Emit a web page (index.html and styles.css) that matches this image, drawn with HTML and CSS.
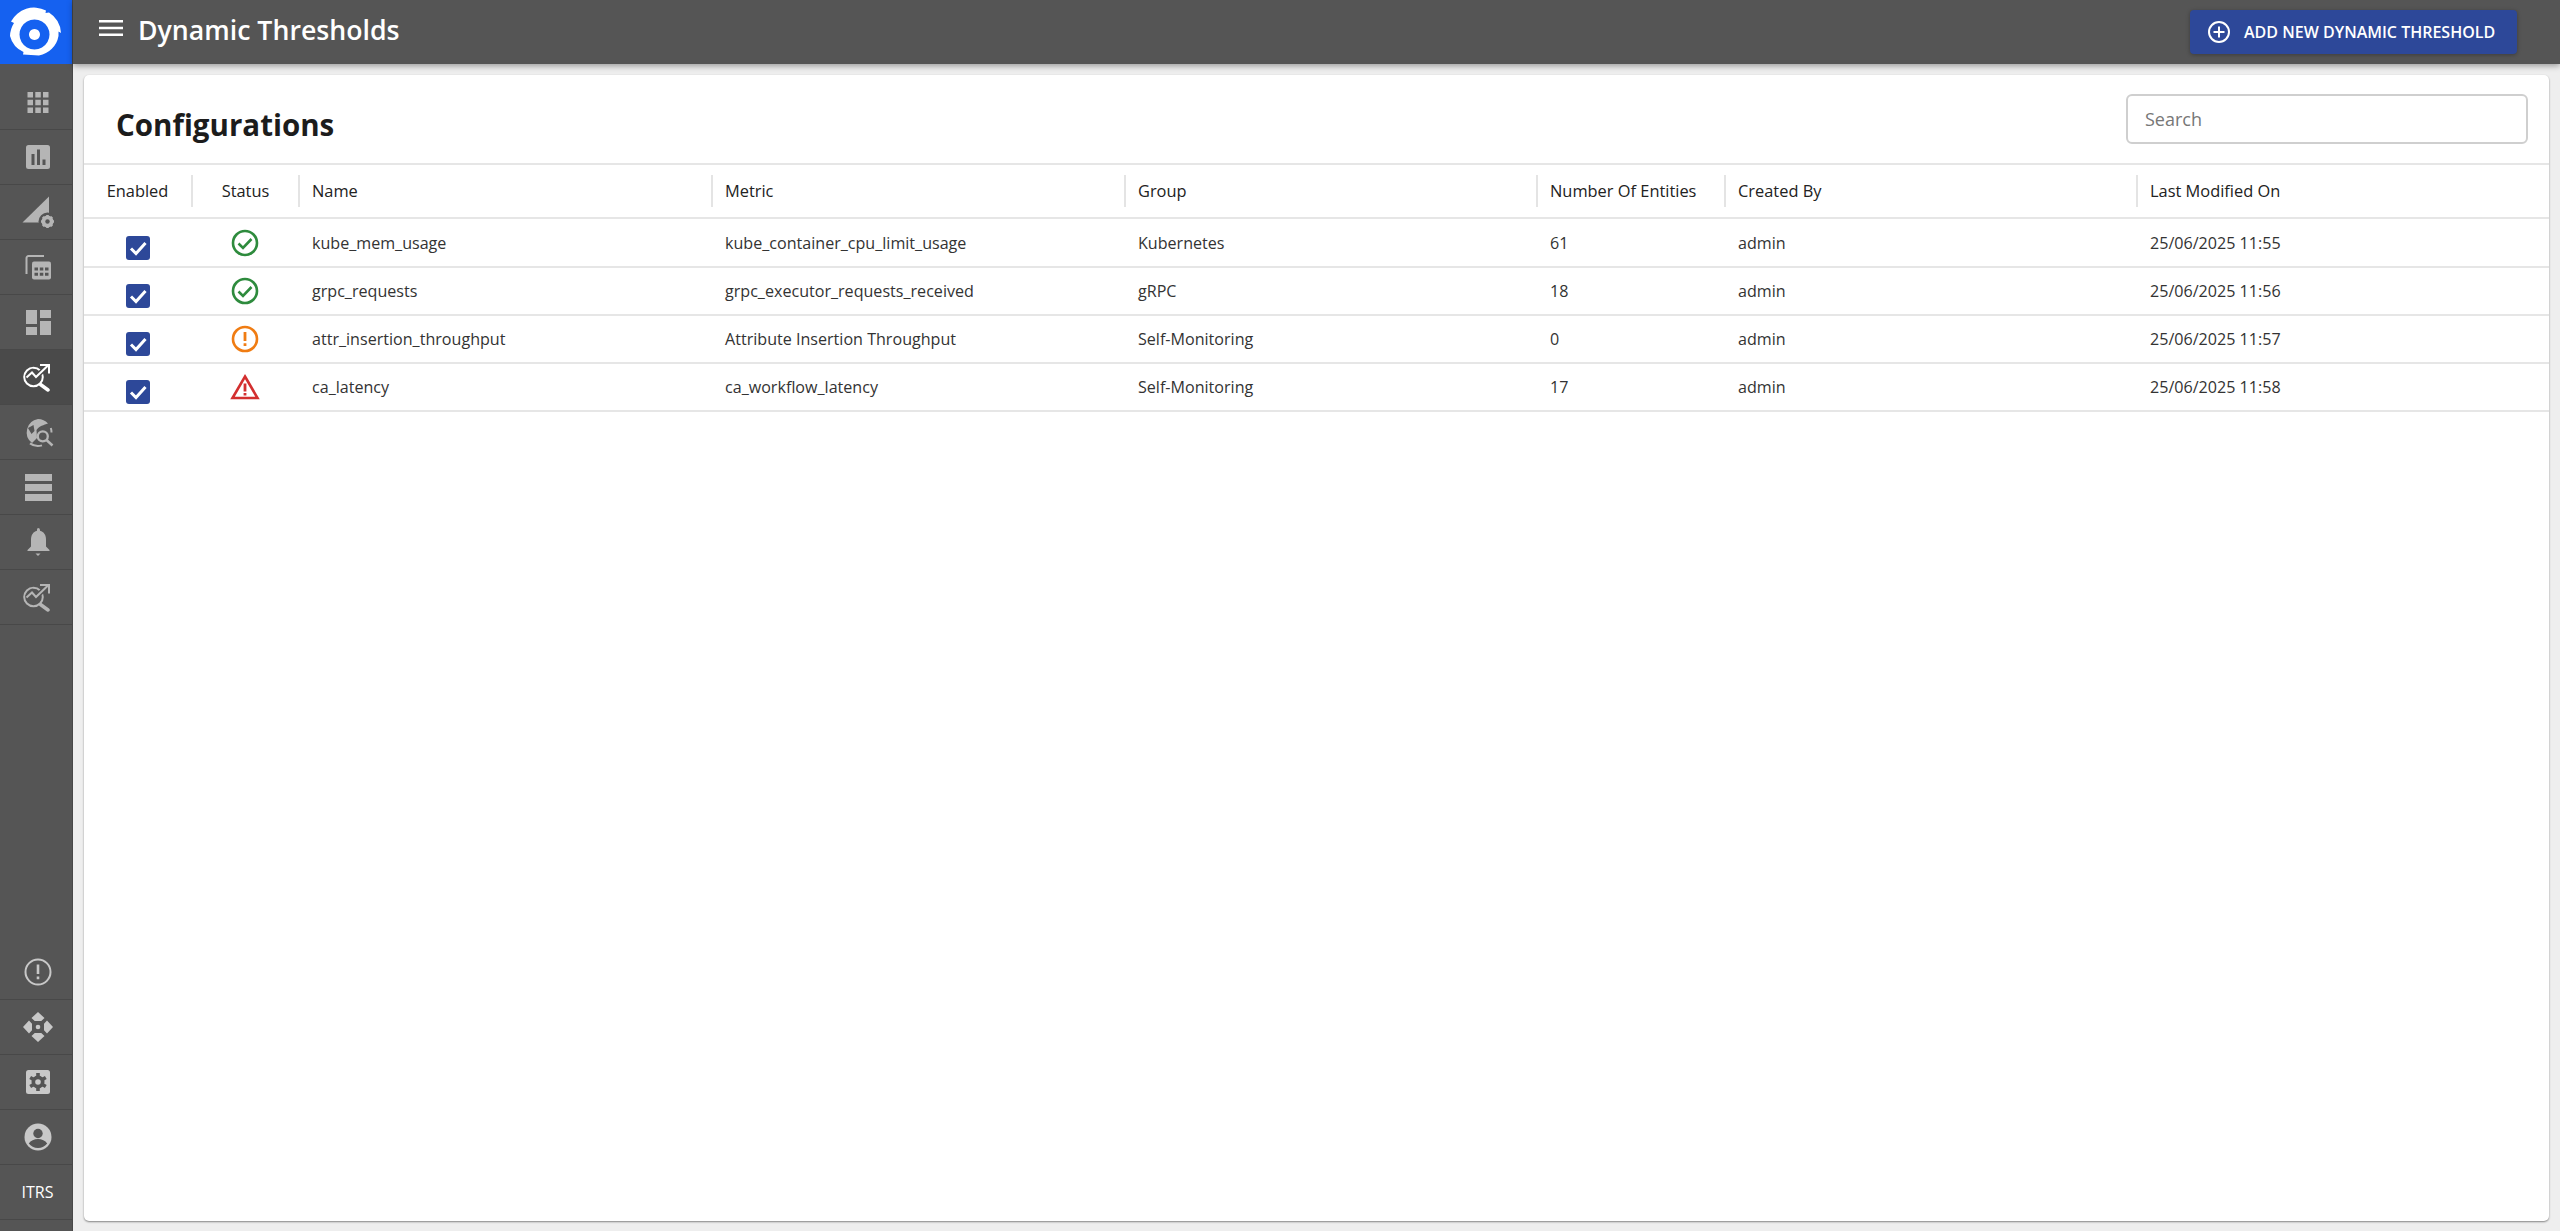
FILE: index.html
```html
<!DOCTYPE html>
<html lang="en">
<head>
<meta charset="utf-8">
<title>Dynamic Thresholds</title>
<link rel="stylesheet" href="styles.css">
</head>
<body>
<div class="app">
  <aside class="sidebar">
    <div class="logo">
      <svg width="72" height="64" viewBox="0 0 72 64"><path fill="#fff" fill-rule="evenodd" d="M11 21.500 A26 26 0 0 1 46 10.500 L45.500 13 L49 12.500 A26 26 0 0 1 61 33 L58.500 31.500 L58.500 36 A24 24 0 0 1 39 55.500 L23 54.500 L23.500 52 A24 24 0 0 1 10 36 A26 26 0 0 1 14 23 Z M34.500 19.500 a15 15 0 1 0 .01 0 Z M34.500 29 a5.500 5.500 0 1 1 -.01 0 Z"/></svg>
    </div>
    <nav class="nav">
      <a class="nav-item"><svg width="28" height="28" viewBox="0 0 28 28" fill="#b5b5b5"><path d="M3.500 4h5.500v5.500h-5.500zM11.300 4h5.500v5.500h-5.500zM19 4h5.500v5.500h-5.500zM3.500 11.800h5.500v5.500h-5.500zM11.300 11.800h5.500v5.500h-5.500zM19 11.800h5.500v5.500h-5.500zM3.500 19.500h5.500v5.500h-5.500zM11.300 19.500h5.500v5.500h-5.500zM19 19.500h5.500v5.500h-5.500z"/></svg></a>
      <a class="nav-item"><svg width="28" height="28" viewBox="0 0 28 28"><rect x="2" y="2" width="24" height="24" rx="2.500" fill="#b5b5b5"/><path fill="#555" d="M7.500 11h3v11h-3zM13 6.500h3v15.500h-3zM18.500 16.500h3v5.500h-3z"/></svg></a>
      <a class="nav-item"><svg width="32" height="32" viewBox="0 0 32 32"><path fill="#b5b5b5" d="M.5 26.500 27 .5v26z"/><circle cx="25.500" cy="25.500" r="9" fill="#555"/><circle cx="25.500" cy="25.500" r="4.300" fill="none" stroke="#b5b5b5" stroke-width="3.400"/><path stroke="#b5b5b5" stroke-width="2.600" d="M25.500 19v13M19 25.500h13M20.900 20.900l9.200 9.200M30.100 20.900l-9.200 9.200"/><circle cx="25.500" cy="25.500" r="2.200" fill="#555"/></svg></a>
      <a class="nav-item"><svg width="28" height="28" viewBox="0 0 28 28" fill="none"><path stroke="#b5b5b5" stroke-width="2" d="M2.500 21V5A2 2 0 0 1 4.500 3H20"/><rect x="8" y="8.500" width="19" height="18" rx="2" fill="#b5b5b5"/><path fill="#555" d="M10.500 14.500h3.500v3h-3.500zM15.800 14.500h3.500v3h-3.500zM21 14.500h3.500v3H21zM10.500 19.800h3.500v3h-3.500zM15.800 19.800h3.500v3h-3.500zM21 19.800h3.500v3H21z"/></svg></a>
      <a class="nav-item"><svg width="28" height="28" viewBox="0 0 28 28" fill="#b5b5b5"><path d="M2 2h11v14H2zM16 2h11v8H16zM16 13h11v14H16zM2 19h11v8H2z"/></svg></a>
      <a class="nav-item active"><svg width="30" height="30" viewBox="0 0 30 30" fill="none" stroke="#fff"><circle cx="10.500" cy="15" r="9.300" stroke-width="2"/><path stroke="#4a4a4a" stroke-width="5" d="M4 15.500 9 10l4 5 12-11.500"/><path stroke-width="2" d="M3.500 15.500 9 10.500l4 4.500 12-11.500"/><path stroke-width="2" d="M17 3h9v8.500"/><path stroke-width="3.500" stroke-linecap="round" d="M17.500 22.500l7.500 5.500"/></svg></a>
      <a class="nav-item"><svg width="32" height="32" viewBox="0 0 32 32" fill="none"><path fill="#b5b5b5" d="M16 3A13.500 13.500 0 0 1 26 7.500C22 9 17 10 14.500 14l.5 8-5 5A13.500 13.500 0 0 1 16 3z"/><path fill="#555" d="m6 12 5.500-3 1 6-3 3z"/><path stroke="#b5b5b5" stroke-width="2" d="M28.800 12A13.500 13.500 0 0 1 29.500 16.500M20 29.400A13.500 13.500 0 0 1 8 27.400"/><circle cx="20.800" cy="20.300" r="5" stroke="#b5b5b5" stroke-width="2.300"/><path stroke="#b5b5b5" stroke-width="2.500" d="m24.500 24 6 5.500"/></svg></a>
      <a class="nav-item"><svg width="28" height="28" viewBox="0 0 28 28" fill="#b5b5b5"><path d="M1 1h27v7H1zM1 11h27v7H1zM1 21h27v7H1z"/></svg></a>
      <a class="nav-item"><svg width="28" height="30" viewBox="0 0 28 30" fill="#b5b5b5"><path d="M14 1a2 2 0 0 1 2 2v.8c4 1 6 4.500 6 8.700v7l3.500 3.500v1H3.500v-1l3.500-3.500v-7c0-4.200 2-7.700 6-8.700V3a2 2 0 0 1 1-2z"/><path d="M11.500 26.500h5L14 29z"/></svg></a>
      <a class="nav-item"><svg width="30" height="30" viewBox="0 0 30 30" fill="none" stroke="#b5b5b5"><circle cx="10.500" cy="15" r="9.300" stroke-width="2"/><path stroke="#555" stroke-width="5" d="M4 15.500 9 10l4 5 12-11.500"/><path stroke-width="2" d="M3.500 15.500 9 10.500l4 4.500 12-11.500"/><path stroke-width="2" d="M17 3h9v8.500"/><path stroke-width="3.500" stroke-linecap="round" d="M17.500 22.500l7.500 5.500"/></svg></a>
    </nav>
    <nav class="nav nav-bottom">
      <a class="nav-item"><svg width="28" height="28" viewBox="0 0 28 28" fill="none"><circle cx="14" cy="14" r="12.500" stroke="#c8c8c8" stroke-width="2"/><path fill="#c8c8c8" d="M12.700 6.500h2.600v9.500h-2.600zM12.700 18.500h2.600v2.800h-2.600z"/></svg></a>
      <a class="nav-item"><svg width="30" height="30" viewBox="0 0 30 30" fill="#c8c8c8"><path d="M15 0l6.500 6-3.200 3h-6.600L8.500 6zM15 30l-6.500-6 3.200-3h6.600l3.200 3zM0 15l6-6.500 3 3.200v6.600l-3 3.200zM30 15l-6 6.500-3-3.200v-6.600l3-3.200z"/><circle cx="15" cy="15" r="2.300"/></svg></a>
      <a class="nav-item"><svg width="28" height="28" viewBox="0 0 28 28"><rect x="2" y="2" width="24" height="24" rx="2.500" fill="#c8c8c8"/><circle cx="14" cy="14" r="6.500" fill="#555"/><path stroke="#555" stroke-width="3.600" d="M14 5v18M6.200 9.500l15.600 9M21.800 9.500l-15.600 9"/><circle cx="14" cy="14" r="2.800" fill="#c8c8c8"/></svg></a>
      <a class="nav-item"><svg width="28" height="28" viewBox="0 0 28 28"><circle cx="14" cy="14" r="13.500" fill="#c8c8c8"/><circle cx="14" cy="10.500" r="4.700" fill="#555"/><path fill="#555" d="M4.800 20.500c1.800-3 5.500-4.500 9.200-4.500s7.400 1.500 9.200 4.500c-2 2.600-5.400 4.500-9.200 4.500s-7.200-1.900-9.200-4.500z"/></svg></a>
      <a class="nav-item nav-text">ITRS</a>
    </nav>
  </aside>
  <div class="main">
    <header class="topbar">
      <button class="menu-btn" type="button" aria-label="Menu"><svg width="24" height="24" viewBox="0 0 24 24" fill="#fff"><path d="M0 4h24v2.400H0zM0 10.800h24v2.400H0zM0 17.600h24V20H0z"/></svg></button>
      <h1 class="page-title">Dynamic Thresholds</h1>
      <button class="add-btn" type="button"><svg width="24" height="24" viewBox="0 0 24 24" fill="none" stroke="#fff" stroke-width="2"><circle cx="12" cy="12" r="10"/><path d="M12 6.500v11M6.500 12h11"/></svg><span>Add new dynamic threshold</span></button>
    </header>
    <main class="content">
      <section class="card">
        <div class="card-head">
          <h2 class="card-title">Configurations</h2>
          <input class="search" type="text" placeholder="Search">
        </div>
        <table class="grid">
          <colgroup><col class="c1"><col class="c2"><col class="c3"><col class="c4"><col class="c5"><col class="c6"><col class="c7"><col class="c8"></colgroup>
          <thead>
            <tr>
              <th class="center"><span class="th-in">Enabled</span></th>
              <th class="center"><span class="th-in">Status</span></th>
              <th><span class="th-in">Name</span></th>
              <th><span class="th-in">Metric</span></th>
              <th><span class="th-in">Group</span></th>
              <th><span class="th-in">Number Of Entities</span></th>
              <th><span class="th-in">Created By</span></th>
              <th><span class="th-in">Last Modified On</span></th>
            </tr>
          </thead>
          <tbody>
            <tr>
              <td class="center check-cell"><span class="check"><svg width="24" height="24" viewBox="0 0 24 24" fill="none" stroke="#fff" stroke-width="3"><path d="m5 12.500 5 5L19.500 7"/></svg></span></td>
              <td class="center"><svg class="st" width="28" height="28" viewBox="0 0 28 28" fill="none" stroke="#2e8b3d" stroke-width="2.600"><circle cx="14" cy="14" r="12"/><path d="m7.500 14.500 4.500 4.500 8.500-9"/></svg></td>
              <td>kube_mem_usage</td><td>kube_container_cpu_limit_usage</td><td>Kubernetes</td><td>61</td><td>admin</td><td>25/06/2025 11:55</td>
            </tr>
            <tr>
              <td class="center check-cell"><span class="check"><svg width="24" height="24" viewBox="0 0 24 24" fill="none" stroke="#fff" stroke-width="3"><path d="m5 12.500 5 5L19.500 7"/></svg></span></td>
              <td class="center"><svg class="st" width="28" height="28" viewBox="0 0 28 28" fill="none" stroke="#2e8b3d" stroke-width="2.600"><circle cx="14" cy="14" r="12"/><path d="m7.500 14.500 4.500 4.500 8.500-9"/></svg></td>
              <td>grpc_requests</td><td>grpc_executor_requests_received</td><td>gRPC</td><td>18</td><td>admin</td><td>25/06/2025 11:56</td>
            </tr>
            <tr>
              <td class="center check-cell"><span class="check"><svg width="24" height="24" viewBox="0 0 24 24" fill="none" stroke="#fff" stroke-width="3"><path d="m5 12.500 5 5L19.500 7"/></svg></span></td>
              <td class="center"><svg class="st" width="28" height="28" viewBox="0 0 28 28" fill="none" stroke="#f07c12" stroke-width="2.600"><circle cx="14" cy="14" r="12"/><path stroke="none" fill="#f07c12" d="M12.600 7h2.800v9h-2.800zM12.600 18.300h2.800v2.700h-2.800z"/></svg></td>
              <td>attr_insertion_throughput</td><td>Attribute Insertion Throughput</td><td>Self-Monitoring</td><td>0</td><td>admin</td><td>25/06/2025 11:57</td>
            </tr>
            <tr>
              <td class="center check-cell"><span class="check"><svg width="24" height="24" viewBox="0 0 24 24" fill="none" stroke="#fff" stroke-width="3"><path d="m5 12.500 5 5L19.500 7"/></svg></span></td>
              <td class="center"><svg class="st" width="30" height="28" viewBox="0 0 30 28" fill="none" stroke="#d32f2f" stroke-width="2.600"><path d="M15 3.500 27.500 25H2.500z"/><path stroke="none" fill="#d32f2f" d="M13.600 10.500h2.800v8h-2.800zM13.600 20h2.800v2.600h-2.800z"/></svg></td>
              <td>ca_latency</td><td>ca_workflow_latency</td><td>Self-Monitoring</td><td>17</td><td>admin</td><td>25/06/2025 11:58</td>
            </tr>
          </tbody>
        </table>
      </section>
    </main>
  </div>
</div>
</body>
</html>
```

FILE: styles.css
```css
* { box-sizing: border-box; }
html, body { height: 100%; margin: 0; }
body { font-family: "Open Sans", "Liberation Sans", sans-serif; background: #eeeeee; color: #222; overflow: hidden; }
.app { display: flex; height: 100vh; }

.sidebar { width: 73px; flex: none; background: #555555; border-right: 1px solid #484848; display: flex; flex-direction: column; }
.logo { height: 64px; background: #1561f0; flex: none; }
.logo svg { display: block; }
.nav { display: flex; flex-direction: column; padding-top: 11px; }
.nav-bottom { margin-top: auto; padding-top: 0; padding-bottom: 11px; }
.nav-item { height: 55px; flex: none; display: flex; align-items: center; justify-content: center; border-bottom: 1px solid #484848; padding-left: 3px; }
.nav-item.active { background: #4a4a4a; }
.nav-text { color: #fff; font-size: 16px; }

.main { flex: 1; min-width: 0; display: flex; flex-direction: column; }
.topbar { height: 64px; flex: none; background: #555555; display: flex; align-items: center; padding: 0 43px 0 26px; box-shadow: 0 2px 6px rgba(0,0,0,.35); position: relative; }
.menu-btn { background: none; border: 0; padding: 0; width: 24px; height: 24px; margin-top: -8px; }
.menu-btn svg { display: block; }
.page-title { margin: -6px 0 0 15px; font-size: 26.7px; font-weight: 600; color: #fff; }
.add-btn { margin-left: auto; height: 44px; width: 327px; background: #2d4899; border: 0; border-radius: 4px; color: #fff; display: flex; align-items: center; gap: 13px; padding: 0 17px; font: 600 16px "Open Sans", sans-serif; text-transform: uppercase; box-shadow: 0 1px 4px rgba(0,0,0,.3); }

.content { flex: 1; min-height: 0; padding: 11px 11px 10px 11px; display: flex; }
.card { flex: 1; background: #fff; border-radius: 5px; box-shadow: 0 1px 2px rgba(0,0,0,.45); }
.card-head { height: 90px; display: flex; align-items: center; justify-content: space-between; padding: 0 21px 0 32px; border-bottom: 2px solid #e6e6e6; }
.card-title { margin: 10px 0 0; font-size: 29.5px; font-weight: 700; color: #1c1c1c; }
.search { width: 402px; height: 50px; border: 2px solid #cfcfcf; border-radius: 6px; padding: 0 17px; font: 18px "Open Sans", sans-serif; color: #333; }
.search::placeholder { color: #777; opacity: 1; }

.grid { width: 100%; border-collapse: collapse; table-layout: fixed; font-size: 16.1px; color: #333; }
.c1, .c2 { width: 107px; }
.c3 { width: 413px; }
.c4 { width: 413px; }
.c5 { width: 412px; }
.c6 { width: 188px; }
.c7 { width: 412px; }
.c8 { width: 413px; }
.grid th { height: 53px; padding: 0; text-align: left; font-size: 16.4px; font-weight: 500; color: #222; border-bottom: 2px solid #e6e6e6; }
.th-in { display: block; height: 32px; line-height: 32px; padding-left: 12px; border-left: 2px solid #e4e4e4; }
.grid th:first-child .th-in { border-left: 0; }
.grid th.center { text-align: center; }
.grid th.center .th-in { padding-left: 0; }
.grid td { height: 48px; padding: 0 0 0 14px; border-bottom: 2px solid #e6e6e6; vertical-align: middle; white-space: nowrap; }
.grid tbody tr:first-child td { height: 49px; }
.grid td.center { padding: 0; text-align: center; }
.grid td.check-cell { padding-top: 10px; }
.check { display: block; width: 24px; height: 24px; margin: 0 auto; background: #2d4899; border-radius: 3px; }
.check svg { display: block; }
.st { display: block; margin: 0 auto; }
```
